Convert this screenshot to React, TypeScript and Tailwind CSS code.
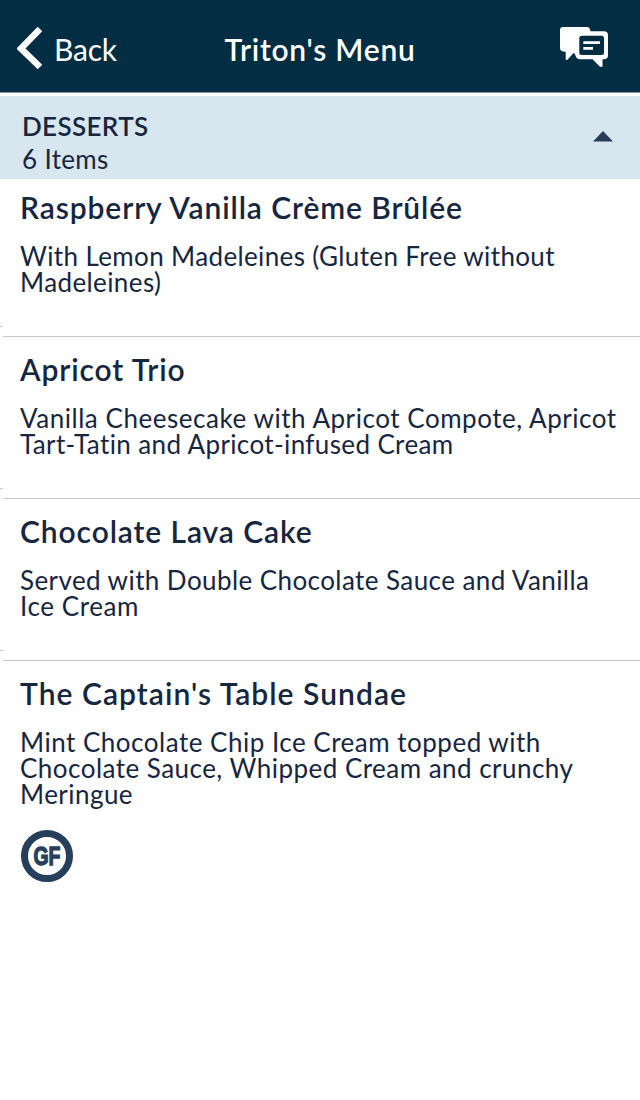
import clsx from "clsx";

type Dish = {
  name: string;
  tracking: string;
  lines: { text: string; tracking: string }[];
  glutenFree?: boolean;
};

const dishes: Dish[] = [
  {
    name: "Raspberry Vanilla Crème Brûlée",
    tracking: "tracking-[0.9px]",
    lines: [
      { text: "With Lemon Madeleines (Gluten Free without", tracking: "tracking-[0.37px]" },
      { text: "Madeleines)", tracking: "tracking-[0.4px]" },
    ],
  },
  {
    name: "Apricot Trio",
    tracking: "tracking-[0.9px]",
    lines: [
      { text: "Vanilla Cheesecake with Apricot Compote, Apricot", tracking: "tracking-[0.54px]" },
      { text: "Tart-Tatin and Apricot-infused Cream", tracking: "tracking-[0.38px]" },
    ],
  },
  {
    name: "Chocolate Lava Cake",
    tracking: "tracking-[0.9px]",
    lines: [
      { text: "Served with Double Chocolate Sauce and Vanilla", tracking: "tracking-[0.42px]" },
      { text: "Ice Cream", tracking: "tracking-[0.6px]" },
    ],
  },
  {
    name: "The Captain's Table Sundae",
    tracking: "tracking-[1.04px]",
    lines: [
      { text: "Mint Chocolate Chip Ice Cream topped with", tracking: "tracking-[0.5px]" },
      { text: "Chocolate Sauce, Whipped Cream and crunchy", tracking: "tracking-[0.47px]" },
      { text: "Meringue", tracking: "tracking-[0.45px]" },
    ],
    glutenFree: true,
  },
];

function ChatIcon() {
  return (
    <svg width="48" height="41" viewBox="0 0 48 41" aria-label="Chat">
      <path
        d="M3 0H27Q30 0 30.500 4.300H44Q48 4.300 48 8.500V28Q48 32.300 44 32.300H42.500V39.700H40L32.500 32.300H20Q16 32.300 15 27L13.500 26L7.500 32.800H5.700V24.800Q0 25 0 21V3Q0 0 3 0Z"
        fill="#fff"
      />
      <rect x="19.300" y="8.700" width="24.700" height="19.300" rx="2.500" fill="#032d42" />
      <path d="M23.300 15.700H40M23.300 21.300H33" stroke="#fff" strokeWidth="2.800" />
    </svg>
  );
}

function Header() {
  return (
    <header className="grid h-[93px] grid-cols-[1fr_auto_1fr] items-center border-b border-[#8b969b] bg-[#032d42] pt-1 text-white">
      <button className="flex items-center pl-[17px]">
        <svg width="25" height="43" viewBox="0 0 25 43" fill="none">
          <path d="M23 2L4 21.500L23 40" stroke="#fff" strokeWidth="6.500" />
        </svg>
        <span className="mt-0.5 ml-3 text-[30px] leading-9 tracking-[-0.2px]">Back</span>
      </button>
      <h1 className="mt-0.5 text-[30px] leading-9 font-semibold tracking-[0.75px]">Triton's Menu</h1>
      <button className="-mt-0.5 justify-self-end pr-8">
        <ChatIcon />
      </button>
    </header>
  );
}

function GlutenFreeBadge() {
  return (
    <svg className="mt-[23px] ml-px" width="52" height="52" viewBox="0 0 52 52">
      <circle cx="26" cy="26" r="22.500" fill="none" stroke="#263f5b" strokeWidth="7" />
      <text
        x="26"
        y="35"
        textAnchor="middle"
        textLength="27"
        lengthAdjust="spacingAndGlyphs"
        fontFamily="Liberation Sans, sans-serif"
        fontSize="26"
        fontWeight="700"
        fill="#263f5b"
        stroke="#263f5b"
        strokeWidth="1.300"
      >
        GF
      </text>
    </svg>
  );
}

function DishRow({ dish, first, last }: { dish: Dish; first: boolean; last: boolean }) {
  return (
    <li className={clsx("flex flex-col", first ? "h-[158px] pt-2.5" : "h-[162px] pt-3.5", last && "h-auto")}>
      <div className="grow pl-5">
        <h3 className={clsx("text-[30px] leading-9 font-semibold", dish.tracking)}>{dish.name}</h3>
        <p className="mt-[18px] text-[26px] leading-[26px] font-normal">
          {dish.lines.map((line) => (
            <span key={line.text} className={clsx("block whitespace-nowrap", line.tracking)}>
              {line.text}
            </span>
          ))}
        </p>
        {dish.glutenFree && <GlutenFreeBadge />}
      </div>
      {!last && (
        <div className="flex h-[11px] shrink-0">
          <span className="w-[3px] border-t border-[#c8c8c8]" />
          <span className="grow border-b border-[#c8c8c8]" />
        </div>
      )}
    </li>
  );
}

export default function App() {
  return (
    <div className="min-h-[1100px] w-full overflow-hidden bg-white font-['Lato',sans-serif] text-[#17263f]">
      <Header />
      <section className="mt-[3px]">
        <div className="flex h-[83px] items-start justify-between bg-[#d8e6ef] pt-3.5 pr-[27px] pl-[22px]">
          <div>
            <h2 className="text-[26px] leading-[33px] font-semibold tracking-[0.35px]">DESSERTS</h2>
            <p className="text-[26px] leading-[33px] tracking-[0.35px]">6 Items</p>
          </div>
          <svg className="mt-[21px]" width="20" height="11" viewBox="0 0 20 11">
            <path d="M10 0L20 10.500H0Z" fill="#263c59" />
          </svg>
        </div>
        <ul>
          {dishes.map((dish, i) => (
            <DishRow key={dish.name} dish={dish} first={i === 0} last={i === dishes.length - 1} />
          ))}
        </ul>
      </section>
    </div>
  );
}
